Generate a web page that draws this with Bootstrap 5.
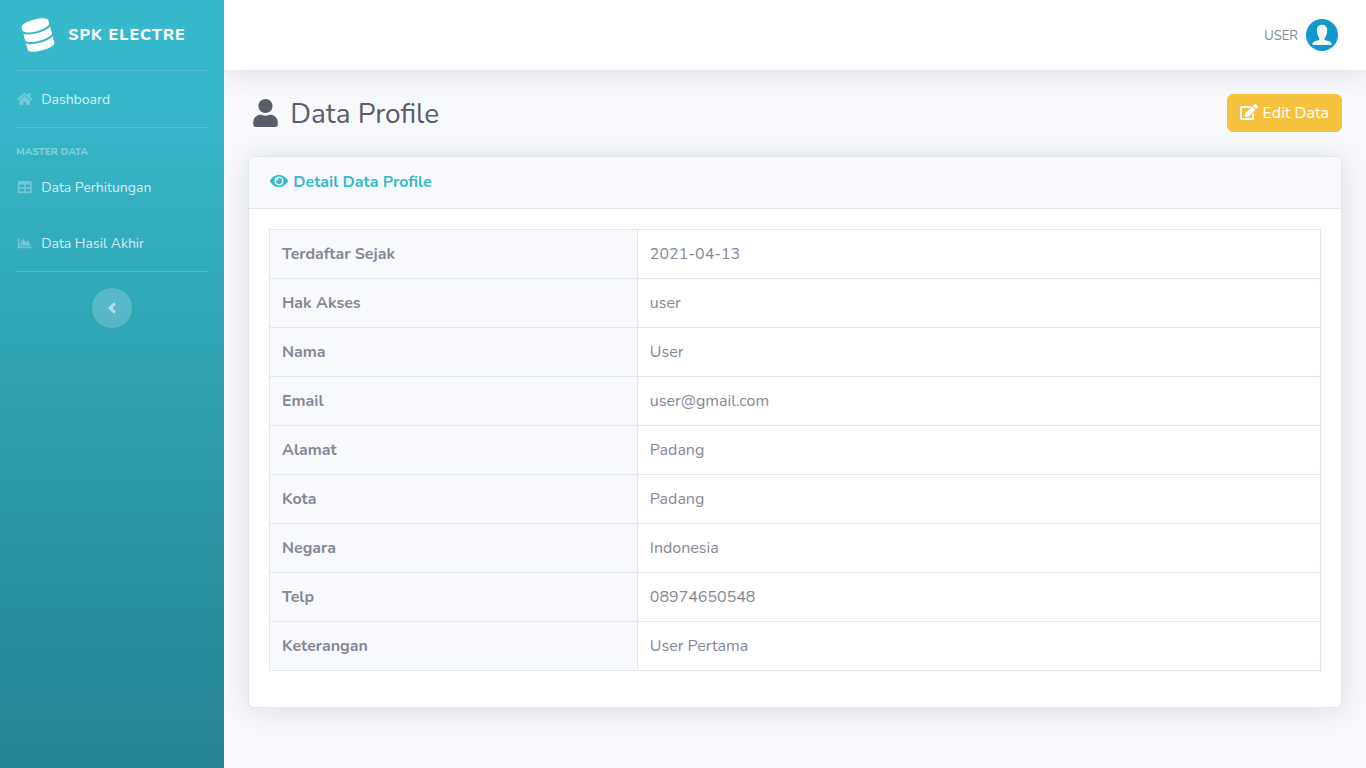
<!DOCTYPE html>
<html lang="id">
<head>
<meta charset="utf-8">
<meta name="viewport" content="width=device-width, initial-scale=1">
<title>SPK ELECTRE - Data Profile</title>
<link href="https://cdn.jsdelivr.net/npm/bootstrap@5.3.0/dist/css/bootstrap.min.css" rel="stylesheet">
<style>
  body { font-family: "Nunito", "Open Sans", sans-serif; color: #858796; background: #f8f9fc; }
  .ico { height: 1em; width: auto; vertical-align: -0.125em; fill: currentColor; flex: none; }
  .ico-fw { width: 1.25em; }

  .side { width: 224px; background: linear-gradient(180deg, #36b9cc 10%, #258391 100%); }
  .side-brand { height: 70px; padding-right: 14px; font-weight: 800; letter-spacing: 1px; color: #fff; }
  .side-brand .ico { height: 32px; transform: rotate(-15deg); }
  .side-line { margin: 0 16px; border-top: 1px solid rgba(255, 255, 255, .15); }
  .side-link { display: block; padding: 17px 16px 15px; font-size: 14px; line-height: 24px; color: rgba(255, 255, 255, .8); text-decoration: none; }
  .side-link:hover { color: #fff; }
  .side-link .ico { color: rgba(255, 255, 255, .3); }
  .side-title { padding: 17px 16px 0; font-size: 10px; font-weight: 800; line-height: 14px; color: rgba(255, 255, 255, .4); }
  .side-toggle { width: 40px; height: 40px; margin-top: 16px; color: rgba(255, 255, 255, .5); background: rgba(255, 255, 255, .2); }
  .side-toggle .ico { stroke: currentColor; stroke-width: 24; overflow: visible; }

  .content { min-width: 0; overflow: hidden; }
  .topbar, .panel { box-shadow: 0 2px 28px rgba(58, 59, 69, .15); }
  .topbar { height: 70px; padding-right: 28px; background: #fff; }
  .user-link { font-size: 13px; line-height: 20px; color: #858796; text-decoration: none; }
  .user-link span { padding-top: 1px; }
  .page-title { font-size: 28px; line-height: 36px; padding-top: 2px; color: #5a5c69; }
  .btn-edit { --bs-btn-color: #fff; --bs-btn-bg: #f6c23e; --bs-btn-border-color: #f6c23e; --bs-btn-hover-color: #fff; --bs-btn-hover-bg: #f4b619; --bs-btn-hover-border-color: #f4b30d; border-radius: 6px; }

  .panel { border: 1px solid #e3e6f0; border-radius: 6px; }
  .panel .card-header { padding: 16px 20px; background: #f8f9fc; border-bottom: 1px solid #e3e6f0; }
  .panel-title { font-size: 16px; font-weight: 700; line-height: 19px; color: #36b9cc; }
  .panel .card-body { padding: 20px; }
  .profile { --bs-table-color: #858796; --bs-table-bg: #fff; color: #858796; border-color: #e3e6f0; }
  .profile th, .profile td { padding: 12px !important; }
  .profile th { width: 35%; background: #f8f9fc !important; }
</style>
</head>
<body>
<div class="d-flex min-vh-100">
  <nav class="side flex-shrink-0" aria-label="Menu">
    <a class="side-brand d-flex align-items-center justify-content-center gap-3 text-decoration-none" href="#">
      <svg class="ico" viewBox="0 0 448 512" aria-hidden="true"><path d="M448 73.143v45.714C448 159.143 347.667 192 224 192S0 159.143 0 118.857V73.143C0 32.857 100.333 0 224 0s224 32.857 224 73.143zM448 176v102.857C448 319.143 347.667 352 224 352S0 319.143 0 278.857V176c48.125 33.143 136.208 48.572 224 48.572S399.874 209.143 448 176zm0 160v102.857C448 479.143 347.667 512 224 512S0 479.143 0 438.857V336c48.125 33.143 136.208 48.572 224 48.572S399.874 369.143 448 336z"/></svg>
      <span>SPK ELECTRE</span>
    </a>
    <div class="side-line"></div>
    <a class="side-link" href="#">
      <svg class="ico ico-fw me-1" viewBox="0 0 576 512" aria-hidden="true"><path d="M280.37 148.26L96 300.11V464a16 16 0 0 0 16 16l112.06-.29a16 16 0 0 0 15.92-16V368a16 16 0 0 1 16-16h64a16 16 0 0 1 16 16v95.64a16 16 0 0 0 16 16.05L464 480a16 16 0 0 0 16-16V300L295.67 148.26a12.19 12.19 0 0 0-15.3 0zM571.6 251.47L488 182.56V44.05a12 12 0 0 0-12-12h-56a12 12 0 0 0-12 12v72.61L318.47 43a48 48 0 0 0-61 0L4.34 251.47a12 12 0 0 0-1.6 16.9l25.5 31A12 12 0 0 0 45.15 301l235.22-193.74a12.19 12.19 0 0 1 15.3 0L530.9 301a12 12 0 0 0 16.9-1.6l25.5-31a12 12 0 0 0-1.7-16.93z"/></svg>
      <span>Dashboard</span>
    </a>
    <div class="side-line"></div>
    <div class="side-title">MASTER DATA</div>
    <a class="side-link" href="#">
      <svg class="ico ico-fw me-1" viewBox="0 0 512 512" aria-hidden="true"><path d="M464 32H48C21.49 32 0 53.49 0 80v352c0 26.51 21.49 48 48 48h416c26.51 0 48-21.49 48-48V80c0-26.51-21.49-48-48-48zM224 416H64v-96h160v96zm0-160H64v-96h160v96zm224 160H288v-96h160v96zm0-160H288v-96h160v96z"/></svg>
      <span>Data Perhitungan</span>
    </a>
    <a class="side-link" href="#">
      <svg class="ico ico-fw me-1" viewBox="0 0 512 512" aria-hidden="true"><path d="M500 384c6.600 0 12 5.400 12 12v40c0 6.600-5.400 12-12 12H12c-6.600 0-12-5.400-12-12V76c0-6.600 5.400-12 12-12h40c6.600 0 12 5.400 12 12v308h436zM372.700 159.500L288 216l-85.300-113.700c-5.100-6.800-15.500-6.300-19.900 1L96 248v104h384l-89.900-187.800c-3.200-6.500-11.400-8.700-17.400-4.700z"/></svg>
      <span>Data Hasil Akhir</span>
    </a>
    <div class="side-line"></div>
    <button class="side-toggle d-flex align-items-center justify-content-center mx-auto p-0 border-0 rounded-circle" type="button" aria-label="Toggle menu">
      <svg class="ico" viewBox="0 0 256 512" aria-hidden="true"><path d="M31.700 239l136-136c9.400-9.400 24.600-9.400 33.900 0l22.600 22.600c9.400 9.400 9.400 24.600 0 33.900L127.900 256l96.400 96.400c9.400 9.400 9.400 24.600 0 33.900L201.700 409c-9.400 9.400-24.600 9.400-33.900 0l-136-136c-9.500-9.400-9.500-24.600-.1-34z"/></svg>
    </button>
  </nav>

  <div class="content flex-grow-1">
    <header class="topbar d-flex align-items-center justify-content-end mb-4">
      <a class="user-link d-flex align-items-center gap-2" href="#">
        <span>USER</span>
        <svg width="32" height="32" viewBox="0 0 32 32" aria-hidden="true"><circle cx="16" cy="16" r="16" fill="#1299cc"/><path fill="#f8f6f6" d="M16 5.700c-3.400 0-5.200 2-5.200 5 0 1.200.2 2 .4 2.700-.5.600 0 2.100.6 2.500.3 1.400.9 2.300 1.600 3v1.700c-.5 1.100-4.400 1.300-5.900 2.400-.8.600-1.100 1.300-1.100 2 0 .6.500.9 1.200.9h16.800c.7 0 1.200-.3 1.200-.9 0-.7-.3-1.400-1.100-2-1.500-1.100-5.400-1.300-5.900-2.400v-1.700c.7-.7 1.300-1.600 1.600-3 .6-.4 1.100-1.900.6-2.500.2-.7.4-1.500.4-2.700 0-3-1.800-5-5.200-5z"/></svg>
      </a>
    </header>

    <main class="px-4">
      <div class="d-flex align-items-center justify-content-between mb-4">
        <h1 class="page-title fw-normal mb-0">
          <svg class="ico ico-fw" viewBox="0 0 448 512" aria-hidden="true"><path d="M224 256c70.700 0 128-57.300 128-128S294.700 0 224 0 96 57.300 96 128s57.300 128 128 128zm89.600 32h-16.700c-22.200 10.200-46.900 16-72.900 16s-50.600-5.800-72.900-16h-16.700C60.200 288 0 348.200 0 422.400V464c0 26.500 21.500 48 48 48h352c26.500 0 48-21.500 48-48v-41.600c0-74.200-60.200-134.400-134.400-134.400z"/></svg>
          Data Profile
        </h1>
        <button class="btn btn-edit" type="button">
          <svg class="ico" viewBox="0 0 576 512" aria-hidden="true"><path d="M402.600 83.200l90.200 90.200c3.800 3.800 3.800 10 0 13.800L274.400 405.600l-92.800 10.300c-12.400 1.400-22.900-9.100-21.500-21.500l10.300-92.800L388.800 83.200c3.800-3.800 10-3.800 13.800 0zm162-22.900l-48.800-48.800c-15.200-15.200-39.900-15.200-55.200 0l-35.400 35.400c-3.800 3.800-3.800 10 0 13.800l90.200 90.200c3.800 3.800 10 3.800 13.800 0l35.400-35.400c15.200-15.300 15.200-40 0-55.200zM384 346.200V448H64V128h229.800c3.200 0 6.200-1.300 8.500-3.500l40-40c7.600-7.600 2.200-20.500-8.500-20.500H48C21.500 64 0 85.500 0 112v352c0 26.500 21.500 48 48 48h352c26.500 0 48-21.500 48-48V306.200c0-10.700-12.900-16-20.500-8.500l-40 40c-2.200 2.300-3.500 5.300-3.500 8.500z"/></svg>
          Edit Data
        </button>
      </div>

      <section class="card panel mb-4">
        <div class="card-header">
          <h2 class="panel-title m-0">
            <svg class="ico ico-fw" viewBox="0 0 576 512" aria-hidden="true"><path d="M572.520 241.400C518.290 135.590 410.930 64 288 64S57.680 135.640 3.480 241.410a32.350 32.350 0 0 0 0 29.190C57.710 376.410 165.070 448 288 448s230.320-71.640 284.520-177.410a32.350 32.350 0 0 0 0-29.190zM288 400a144 144 0 1 1 144-144 143.930 143.930 0 0 1-144 144zm0-240a95.310 95.310 0 0 0-25.310 3.790 47.850 47.850 0 0 1-66.900 66.900A95.780 95.780 0 1 0 288 160z"/></svg>
            Detail Data Profile
          </h2>
        </div>
        <div class="card-body">
          <table class="table table-bordered profile mb-3">
            <tbody>
              <tr><th scope="row">Terdaftar Sejak</th><td>2021-04-13</td></tr>
              <tr><th scope="row">Hak Akses</th><td>user</td></tr>
              <tr><th scope="row">Nama</th><td>User</td></tr>
              <tr><th scope="row">Email</th><td>user@gmail.com</td></tr>
              <tr><th scope="row">Alamat</th><td>Padang</td></tr>
              <tr><th scope="row">Kota</th><td>Padang</td></tr>
              <tr><th scope="row">Negara</th><td>Indonesia</td></tr>
              <tr><th scope="row">Telp</th><td>08974650548</td></tr>
              <tr><th scope="row">Keterangan</th><td>User Pertama</td></tr>
            </tbody>
          </table>
        </div>
      </section>
    </main>
  </div>
</div>
<script src="https://cdn.jsdelivr.net/npm/bootstrap@5.3.0/dist/js/bootstrap.bundle.min.js"></script>
</body>
</html>
